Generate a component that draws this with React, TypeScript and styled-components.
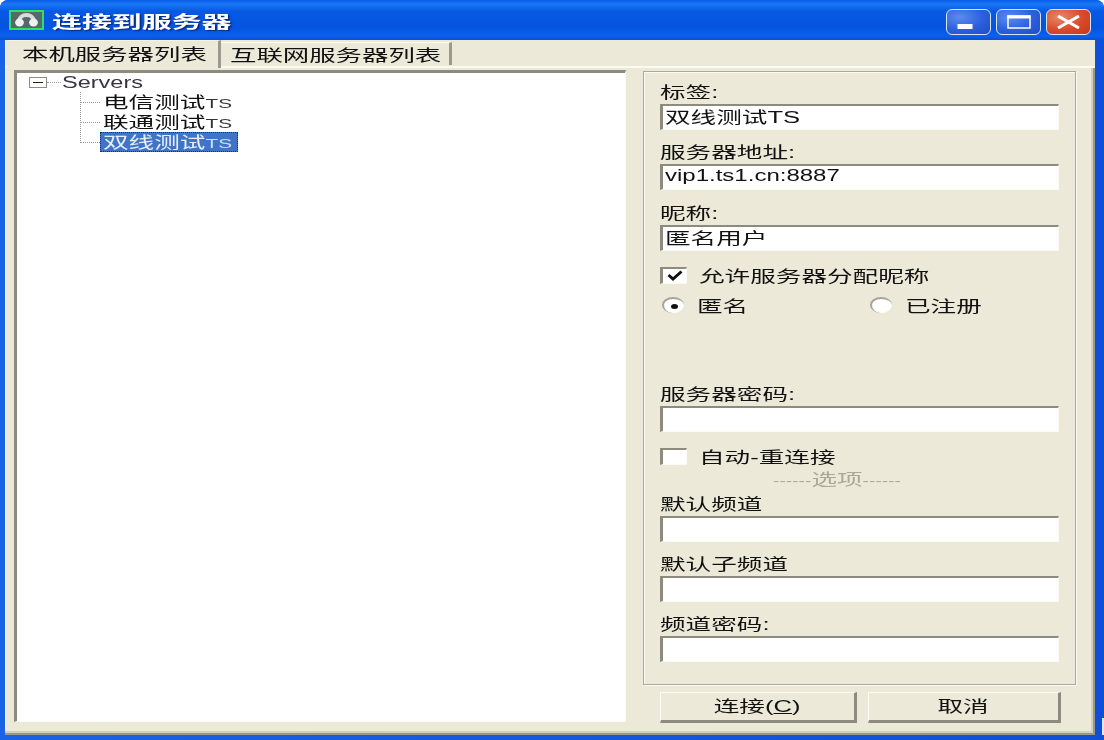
import React from "react";
import styled, { createGlobalStyle } from "styled-components";

const GlobalStyle = createGlobalStyle`
  html, body {
    margin: 0;
    padding: 0;
    background: #fff;
  }
`;

const beige = "#ece9d8";
const fontStack = `"Liberation Sans", "Noto Sans CJK SC", sans-serif`;

const TREE_ITEMS = ["电信测试", "联通测试", "双线测试"];

export default function App() {
  return (
    <>
      <GlobalStyle />
      <Window>
        <TitleBar>
          <AppIcon />
          <TitleText>连接到服务器</TitleText>
          <WindowButtons>
            <WinButton>
              <svg width="26" height="18" viewBox="0 0 26 18">
                <rect x="1.5" y="11" width="15" height="5" fill="#fff" />
              </svg>
            </WinButton>
            <WinButton>
              <svg width="24" height="14" viewBox="0 0 24 14" fill="none">
                <rect x="1" y="1" width="22" height="12" stroke="#fff" strokeWidth="1.5" />
                <rect x="0.5" y="0.5" width="23" height="3" fill="#fff" />
              </svg>
            </WinButton>
            <WinButton $close>
              <svg width="23" height="14" viewBox="0 0 23 14" fill="none">
                <path d="M1 1 L22 13 M22 1 L1 13" stroke="#fff" strokeWidth="3" />
              </svg>
            </WinButton>
          </WindowButtons>
        </TitleBar>

        <Frame>
          <TabStrip>
            <Tab $active>
              <Txt $scale={1.65}>本机服务器列表</Txt>
            </Tab>
            <Tab>
              <Txt $scale={1.65}>互联网服务器列表</Txt>
            </Tab>
          </TabStrip>

          <Content>
            <TreePanel>
              <TreeRoot>
                <ExpandBox />
                <RootDots />
                <Txt $scale={1.47} $color="#3a3340">Servers</Txt>
              </TreeRoot>
              <TreeChildren>
                {TREE_ITEMS.map((name, i) => (
                  <TreeRow key={name}>
                    <TreeLabel $selected={i === 2}>
                      <Txt>
                        {name}
                        <TreeLatin>TS</TreeLatin>
                      </Txt>
                    </TreeLabel>
                  </TreeRow>
                ))}
              </TreeChildren>
            </TreePanel>

            <SidePanel>
              <GroupBox>
                <Field>
                  <Label><Txt>标签:</Txt></Label>
                  <Input><Txt>双线测试TS</Txt></Input>
                </Field>
                <Field>
                  <Label><Txt>服务器地址:</Txt></Label>
                  <Input><Txt $scale={1.5}>vip1.ts1.cn:8887</Txt></Input>
                </Field>
                <Field $top={11}>
                  <Label><Txt>昵称:</Txt></Label>
                  <Input><Txt>匿名用户</Txt></Input>
                </Field>

                <CheckRow $top={14}>
                  <CheckBox>
                    <svg width="16" height="11" viewBox="0 0 16 11" fill="none">
                      <path d="M1.5 5 L6 9 L14.5 1.5" stroke="#111" strokeWidth="3" />
                    </svg>
                  </CheckBox>
                  <Txt>允许服务器分配昵称</Txt>
                </CheckRow>

                <RadioRow>
                  <RadioOption>
                    <Radio $checked />
                    <Txt>匿名</Txt>
                  </RadioOption>
                  <RadioOption>
                    <Radio />
                    <Txt>已注册</Txt>
                  </RadioOption>
                </RadioRow>

                <Field $top={67}>
                  <Label><Txt>服务器密码:</Txt></Label>
                  <Input />
                </Field>

                <CheckRow $top={14}>
                  <CheckBox />
                  <Txt>自动-重连接</Txt>
                </CheckRow>

                <Separator>
                  <Txt $color="#aaa79a">
                    <SeparatorDash>------</SeparatorDash>选项<SeparatorDash>------</SeparatorDash>
                  </Txt>
                </Separator>

                <Field $top={2}>
                  <Label><Txt>默认频道</Txt></Label>
                  <Input />
                </Field>
                <Field>
                  <Label><Txt>默认子频道</Txt></Label>
                  <Input />
                </Field>
                <Field>
                  <Label><Txt>频道密码:</Txt></Label>
                  <Input />
                </Field>
              </GroupBox>

              <ButtonRow>
                <PushButton $width={197}>
                  <Txt $center>
                    连接(<u>C</u>)
                  </Txt>
                </PushButton>
                <PushButton $width={193}>
                  <Txt $center>取消</Txt>
                </PushButton>
              </ButtonRow>
            </SidePanel>
          </Content>
        </Frame>
        <CornerPatch />
      </Window>
    </>
  );
}

function AppIcon() {
  return (
    <IconBox>
      <svg width="35" height="20" viewBox="0 0 35 20" fill="none">
        <rect x="1" y="1" width="33" height="18" fill="#56686a" stroke="#2ee060" strokeWidth="2" />
        <path d="M10 12 C10 2.5 25 2.5 25 12" stroke="#d8dcdc" strokeWidth="4" />
        <ellipse cx="10.5" cy="12.5" rx="4.4" ry="4" fill="#eef0f0" />
        <ellipse cx="24.5" cy="12.5" rx="4.4" ry="4" fill="#eef0f0" />
      </svg>
    </IconBox>
  );
}

const Window = styled.div`
  width: 1104px;
  height: 740px;
  position: relative;
  display: flex;
  flex-direction: column;
  overflow: hidden;
  font-family: ${fontStack};
  font-size: 16px;
  color: #111;
  background: linear-gradient(90deg, #1a62e6 0%, #0f4fd8 100%);
  border-radius: 8px 8px 0 0;
  filter: blur(0.6px);
`;

const CornerPatch = styled.div`
  position: absolute;
  right: 0;
  bottom: 5px;
  width: 2px;
  height: 17px;
  background: #dfe6f6;
`;

const TitleBar = styled.div`
  height: 40px;
  flex: none;
  display: flex;
  align-items: center;
  padding: 2px 13px 2px 9px;
  box-sizing: border-box;
  background: linear-gradient(
    180deg,
    #0a5be8 0%,
    #1a78f5 10%,
    #0759e4 28%,
    #0554e0 70%,
    #0a60ee 90%,
    #0a50d0 100%
  );
`;

const IconBox = styled.div`
  width: 35px;
  height: 20px;
  display: flex;
`;

const TitleText = styled.div`
  margin-left: 8px;
  width: 180px;
  color: #fff;
  font-weight: 700;
  font-size: 17px;
  text-shadow: 1px 1px 1px #0a2a80;
  transform: scaleX(1.76);
  transform-origin: left center;
  white-space: nowrap;
`;

const WindowButtons = styled.div`
  margin-left: auto;
  margin-top: 4px;
  display: flex;
  gap: 5px;
`;

const WinButton = styled.div<{ $close?: boolean }>`
  width: 45px;
  height: 26px;
  box-sizing: border-box;
  display: flex;
  align-items: center;
  justify-content: center;
  border: 1.5px solid #d8e4f8;
  border-radius: 6px;
  background: ${(p) =>
    p.$close
      ? "radial-gradient(ellipse at 30% 30%, #e8886a 0%, #d9492a 55%, #c23a1c 100%)"
      : "radial-gradient(ellipse at 30% 30%, #5a8cf0 0%, #2b5fdc 55%, #1f4cc4 100%)"};
`;

const Frame = styled.div`
  flex: 1;
  min-height: 0;
  margin: 0 9px 5px 5px;
  display: flex;
  flex-direction: column;
  background: ${beige};
`;

const TabStrip = styled.div`
  height: 28px;
  flex: none;
  display: flex;
  align-items: stretch;
  padding-left: 2px;
  box-shadow: inset 0 -2px 0 #fbfaf5, inset 1px 0 0 #fbfaf5;
`;

const Tab = styled.div<{ $active?: boolean }>`
  box-sizing: border-box;
  width: ${(p) => (p.$active ? 214 : 231)}px;
  padding-left: ${(p) => (p.$active ? 15 : 9)}px;
  padding-bottom: ${(p) => (p.$active ? 4 : 1)}px;
  margin-top: ${(p) => (p.$active ? 0 : 2)}px;
  margin-bottom: ${(p) => (p.$active ? 0 : 3)}px;
  display: flex;
  align-items: center;
  white-space: nowrap;
  background: ${beige};
  border-right: 3px solid #9c9a8c;
  border-top: 1px solid ${(p) => (p.$active ? "#f5f3e8" : "#fbfaf5")};
`;

const Content = styled.div`
  flex: 1;
  min-height: 0;
  display: flex;
  padding: 2px 20px 13px 9px;
  gap: 17px;
  box-shadow: inset -2px -2px 0 #9a978a, inset -4px -4px 0 #d2cfbf, inset 1px 0 0 #fbfaf5;
`;

const TreePanel = styled.div`
  width: 612px;
  flex: none;
  box-sizing: border-box;
  background: #fff;
  border-style: solid;
  border-width: 3px 1px 1px 3px;
  border-color: #8d8a7e #fbfaf5 #fbfaf5 #8d8a7e;
  padding: 0 0 0 12px;
`;

const TreeRoot = styled.div`
  height: 19px;
  display: flex;
  align-items: center;
`;

const ExpandBox = styled.div`
  width: 18px;
  height: 11px;
  flex: none;
  box-sizing: border-box;
  border: 1px solid #8e8d84;
  position: relative;

  &::after {
    content: "";
    position: absolute;
    left: 3px;
    right: 3px;
    top: 4px;
    height: 1px;
    background: #222;
  }
`;

const RootDots = styled.div`
  width: 14px;
  flex: none;
  height: 0;
  border-top: 1px dotted #9a9a9a;
  margin-right: 1px;
`;

const TreeChildren = styled.div`
  margin-left: 51px;
  width: 400px;
  position: relative;

  &::before {
    content: "";
    position: absolute;
    left: 0;
    top: 0;
    height: 51px;
    border-left: 1px dotted #9a9a9a;
  }
`;

const TreeRow = styled.div`
  height: 20px;
  display: flex;
  align-items: center;
  padding-left: 20px;
  position: relative;

  &::before {
    content: "";
    position: absolute;
    left: 1px;
    width: 19px;
    top: 10px;
    border-top: 1px dotted #9a9a9a;
  }
`;

const TreeLabel = styled.div<{ $selected?: boolean }>`
  width: 138px;
  height: 20px;
  box-sizing: border-box;
  display: flex;
  align-items: center;
  padding-left: 3px;
  padding-bottom: 2px;
  white-space: nowrap;
  ${(p) =>
    p.$selected
      ? `background: #3f74c8;
         color: #e8eefa;
         outline: 1px dotted #22344f;
         outline-offset: -1px;`
      : ""}
`;

const TreeLatin = styled.span`
  font-size: 13px;
  color: inherit;
  opacity: 0.85;
`;

const SidePanel = styled.div`
  flex: 1;
  min-width: 0;
  display: flex;
  flex-direction: column;
  margin-top: 1px;
`;

const GroupBox = styled.div`
  width: 433px;
  height: 614px;
  flex: none;
  box-sizing: border-box;
  padding: 8px 16px 0;
  border: 1px solid #aca899;
  box-shadow: 1px 1px 0 #fbfaf5, inset 1px 1px 0 #fbfaf5;
`;

const Field = styled.div<{ $top?: number }>`
  margin-top: ${(p) => p.$top ?? 10}px;

  &:first-child {
    margin-top: 0;
  }
`;

const Label = styled.div`
  height: 24px;
  padding-bottom: 2px;
  box-sizing: border-box;
  display: flex;
  align-items: center;
  white-space: nowrap;
`;

const Input = styled.div`
  width: 399px;
  height: 26px;
  box-sizing: border-box;
  display: flex;
  align-items: center;
  padding: 0 0 3px 2px;
  background: #fff;
  border-style: solid;
  border-width: 2px 1px 1px 3px;
  border-color: #8d8a7e #fbfaf5 #fbfaf5 #8d8a7e;
  white-space: nowrap;
`;

const CheckRow = styled.div<{ $top: number }>`
  margin-top: ${(p) => p.$top}px;
  height: 20px;
  display: flex;
  align-items: center;
  gap: 12px;
  white-space: nowrap;
`;

const CheckBox = styled.div`
  width: 27px;
  height: 17px;
  flex: none;
  box-sizing: border-box;
  display: flex;
  align-items: center;
  justify-content: center;
  background: #fff;
  border-style: solid;
  border-width: 2px 1px 1px 3px;
  border-color: #8d8a7e #fbfaf5 #fbfaf5 #8d8a7e;
`;

const RadioRow = styled.div`
  margin-top: 10px;
  height: 20px;
  display: flex;
  align-items: center;
`;

const RadioOption = styled.div`
  width: 208px;
  flex: none;
  display: flex;
  align-items: center;
  gap: 13px;
  white-space: nowrap;
  padding-left: 2px;
  box-sizing: border-box;
`;

const Radio = styled.div<{ $checked?: boolean }>`
  width: 22px;
  height: 16px;
  flex: none;
  box-sizing: border-box;
  border-radius: 50%;
  background: #fff;
  border-style: solid;
  border-width: 2px 0 0 2px;
  border-color: #a8a598;
  display: flex;
  align-items: center;
  justify-content: center;

  &::after {
    content: "";
    display: ${(p) => (p.$checked ? "block" : "none")};
    width: 7px;
    height: 5px;
    border-radius: 50%;
    background: #111;
  }
`;

const Separator = styled.div`
  height: 24px;
  padding-left: 113px;
  display: flex;
  align-items: center;
  white-space: nowrap;
`;

const SeparatorDash = styled.span`
  font-size: 12px;
`;

const ButtonRow = styled.div`
  display: flex;
  gap: 11px;
  padding: 7px 0 0 17px;
`;

const PushButton = styled.div<{ $width: number }>`
  width: ${(p) => p.$width}px;
  height: 31px;
  box-sizing: border-box;
  display: flex;
  align-items: center;
  justify-content: center;
  padding-bottom: 3px;
  white-space: nowrap;
  background: ${beige};
  border-style: solid;
  border-width: 1px 3px 3px 1px;
  border-color: #fbfaf5 #8d8a7e #8d8a7e #fbfaf5;
`;

// 원본 스크린샷이 가로로 늘어나 있어서 글자만 가로로 키움
const Txt = styled.span<{ $color?: string; $scale?: number; $center?: boolean }>`
  display: inline-block;
  color: ${(p) => p.$color ?? "inherit"};
  transform: scaleX(${(p) => p.$scale ?? 1.6});
  transform-origin: ${(p) => (p.$center ? "center" : "left center")};
`;
